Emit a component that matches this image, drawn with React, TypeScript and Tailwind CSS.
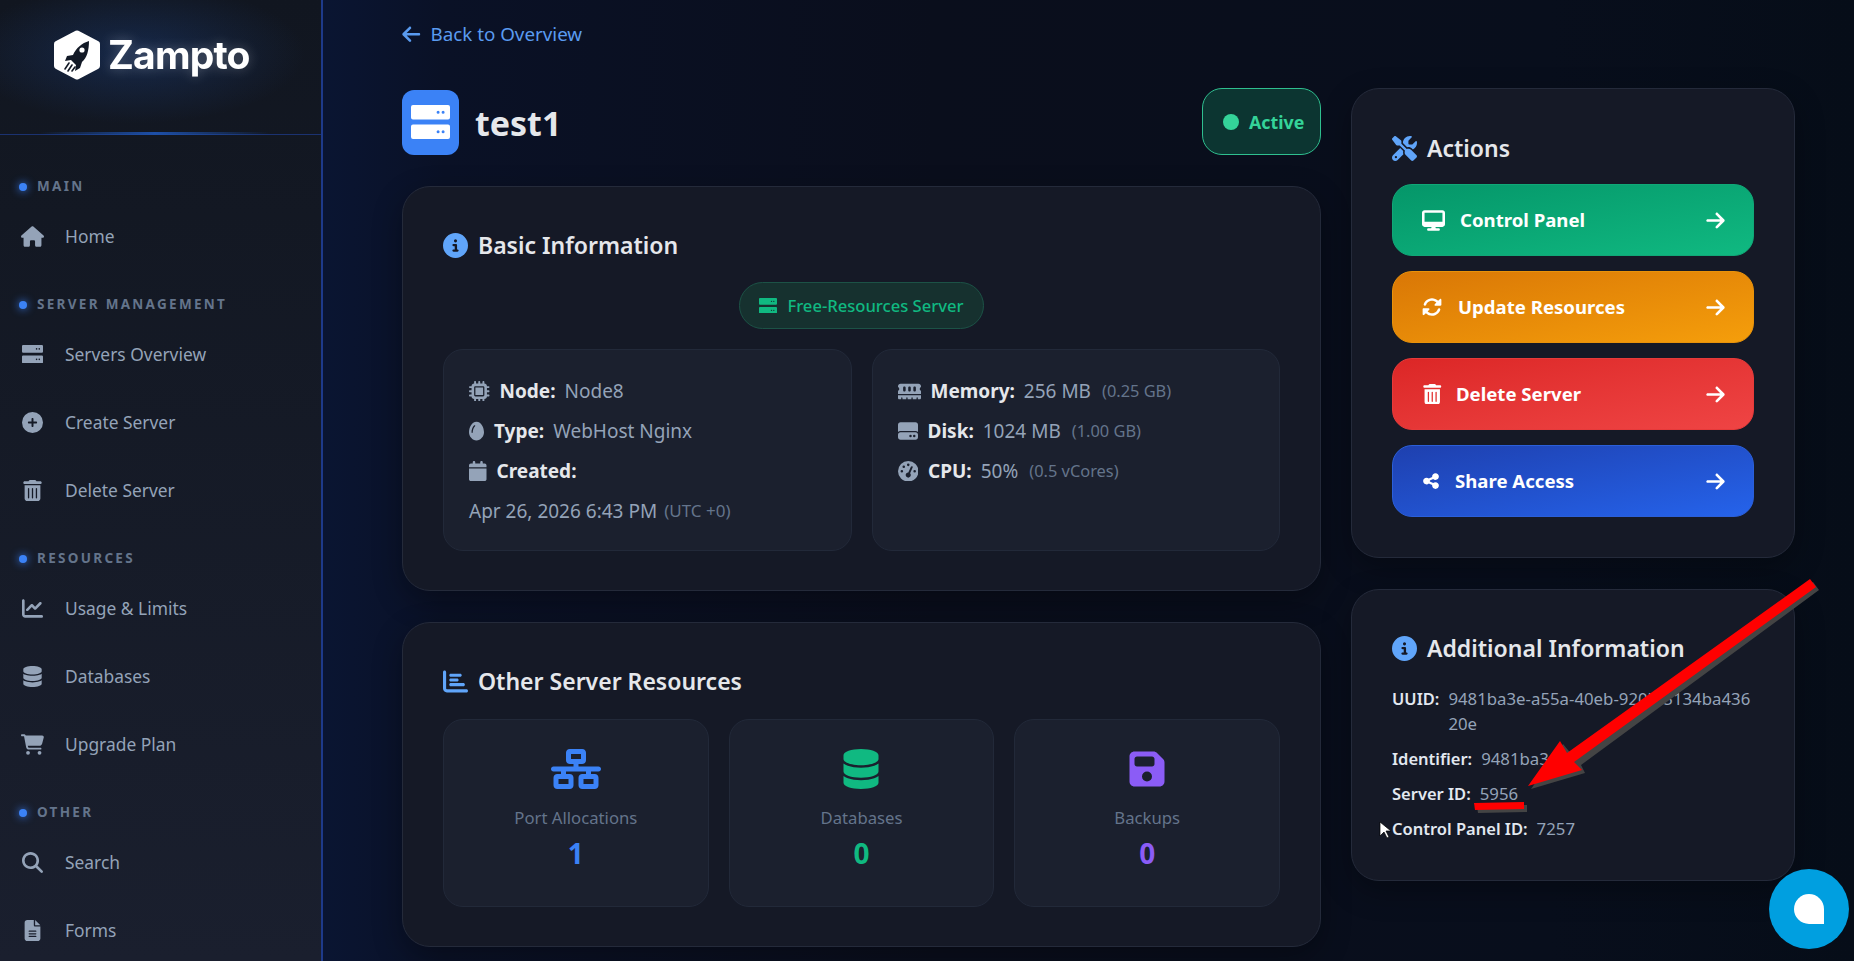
import React from "react";
import {
  FaHouse, FaCirclePlus, FaTrashCan, FaChartLine, FaDatabase, FaCartShopping, FaMagnifyingGlass, FaFileLines,
  FaArrowLeft, FaArrowRight, FaCircleInfo, FaMicrochip, FaEgg, FaCalendar, FaMemory, FaHardDrive, FaGaugeHigh,
  FaChartBar, FaNetworkWired, FaFloppyDisk, FaScrewdriverWrench, FaDesktop, FaRotate, FaShareNodes,
} from "react-icons/fa6";

type IconT = React.ComponentType<{ size?: number; className?: string }>;

function ServerIcon({ size = 20, className }: { size?: number; className?: string }) {
  const bar = (y: number) =>
    `M2 ${y}H37a2 2 0 0 1 2 2V${y + 12.6}a2 2 0 0 1-2 2H2a2 2 0 0 1-2-2V${y + 2}a2 2 0 0 1 2-2Z` +
    `M25.6 ${y + 7.3}a1.5 1.5 0 1 0 3 0a1.5 1.5 0 1 0-3 0Z` +
    `M30.6 ${y + 7.3}a1.5 1.5 0 1 0 3 0a1.5 1.5 0 1 0-3 0Z`;
  return (
    <svg width={size} height={(size * 34) / 39} viewBox="0 0 39 34" fill="currentColor" className={className}>
      <path fillRule="evenodd" d={bar(0) + bar(19.4)} />
    </svg>
  );
}

const nav: { label: string; items: [IconT, string, number][] }[] = [
  { label: "MAIN", items: [[FaHouse, "Home", 23]] },
  { label: "SERVER MANAGEMENT", items: [[ServerIcon, "Servers Overview", 21], [FaCirclePlus, "Create Server", 21], [FaTrashCan, "Delete Server", 21]] },
  { label: "RESOURCES", items: [[FaChartLine, "Usage & Limits", 21], [FaDatabase, "Databases", 21], [FaCartShopping, "Upgrade Plan", 23]] },
  { label: "OTHER", items: [[FaMagnifyingGlass, "Search", 21], [FaFileLines, "Forms", 21]] },
];

function Sidebar() {
  return (
    <aside className="w-[323px] shrink-0 h-full border-r-2 border-[#1e3a8a] bg-linear-to-b from-[#111620] to-[#1a1f2e] flex flex-col">
      <div className="relative h-[135px] shrink-0 border-b border-[#1b3270] bg-[radial-gradient(ellipse_170px_70px_at_42%_40%,rgba(30,70,140,0.38),transparent)]">
        <div className="flex items-center pl-[54px] pt-[30px]">
          <svg width="46" height="50" viewBox="0 0 46 50" className="shrink-0">
            <polygon points="23,3.5 43,14 43,36 23,46.5 3,36 3,14" fill="#fff" stroke="#fff" strokeWidth="6" strokeLinejoin="round" />
            <path d="M35 11 C28 13 22 18 19 25 L13 26 L11 31 L17 30 L22 35 L21 41 L26 38 L28 32 C33 28 35 20 35 11Z" fill="#121926" />
            <circle cx="28" cy="20" r="2.6" fill="#fff" />
            <path d="M15 33 L11 39 M18 35 L14 41 M21 37 L18 41" stroke="#121926" strokeWidth="1.6" strokeLinecap="round" />
          </svg>
          <span className="ml-[8px] -mt-[1px] font-['Inter',sans-serif] font-bold text-[39px] leading-none tracking-[-0.8px] text-white drop-shadow-[0_0_6px_rgba(255,255,255,0.25)]">Zampto</span>
        </div>
        <div className="absolute left-[40px] bottom-[-1px] w-[230px] h-[3px] bg-linear-to-r from-transparent via-[#1d4fa8] to-transparent" />
      </div>
      <nav className="pt-[33px] flex flex-col gap-[16px]">
        {nav.map((s) => (
          <div key={s.label}>
            <div className="h-[34px] pt-[3px] flex items-center pl-[19px]">
              <span className="w-[8px] h-[8px] rounded-full bg-[#3b82f6] shadow-[0_0_8px_#3b82f6]" />
              <span className="ml-[10px] text-[13.5px] font-bold tracking-[2.3px] text-[#64748b] leading-none">{s.label}</span>
            </div>
            {s.items.map(([I, t, sz]) => (
              <div key={t} className="h-[68px] flex items-center pl-[21px]">
                <span className="w-[23px] flex justify-center text-[#94a3b8]"><I size={sz} /></span>
                <span className="ml-[21px] text-[17.4px] text-[#94a3b8]">{t}</span>
              </div>
            ))}
          </div>
        ))}
      </nav>
    </aside>
  );
}

const card = "rounded-[28px] bg-[#151926] border border-[#242a3a] shadow-[0_10px_30px_rgba(0,0,0,0.3)]";
const sub = "rounded-[20px] bg-[#1b202e] border border-[#222939]";

function Heading({ icon, children, h = 38 }: { icon: React.ReactNode; children: React.ReactNode; h?: number }) {
  return (
    <div className={h === 38 ? "h-[38px] flex items-center" : "h-[36px] flex items-center"}>
      {icon}
      <span className="ml-[10px] text-[23px] font-semibold text-[#e5e7eb]">{children}</span>
    </div>
  );
}

function Row({ icon, label, value, note, noteClass = "ml-[11px] text-[16.4px]" }: { icon: React.ReactNode; label?: string; value?: string; note?: string; noteClass?: string }) {
  return (
    <div className="h-[40px] flex items-center text-[19px] whitespace-nowrap">
      {icon}
      {label && <span className="ml-[10px] font-bold text-[#e5e7eb] text-[19px]">{label}</span>}
      {value && <span className={"text-[#94a3b8] " + (label ? "ml-[9px]" : "")}>{value}</span>}
      {note && <span className={"text-[#64748b] " + noteClass}>{note}</span>}
    </div>
  );
}

function Stat({ icon, label, value, color }: { icon: React.ReactNode; label: string; value: string; color: string }) {
  return (
    <div className={sub + " h-[188px] flex flex-col items-center pt-[29px]"}>
      <div className="h-[40px] flex items-center">{icon}</div>
      <div className="mt-[17px] h-[24px] leading-[24px] text-[16.7px] text-[#64748b]">{label}</div>
      <div className={"mt-[4px] h-[38px] leading-[38px] text-[28px] font-bold " + color}>{value}</div>
    </div>
  );
}

const actions: [IconT, string, string, number, string][] = [
  [FaDesktop, "Control Panel", "from-[#059669] to-[#10b981] border-[#10a877]", 23, "ml-[15px]"],
  [FaRotate, "Update Resources", "from-[#d97706] to-[#f59e0b] border-[#e8920a]", 20, "ml-[16px]"],
  [FaTrashCan, "Delete Server", "from-[#dc2626] to-[#ef4444] border-[#e63a3a]", 20.5, "ml-[13.5px]"],
  [FaShareNodes, "Share Access", "from-[#1e40af] to-[#2563eb] border-[#2b5fd9]", 18, "ml-[15px]"],
];

const info: [string, string][] = [
  ["UUID:", "9481ba3e-a55a-40eb-920b-5134ba43620e"],
  ["Identifier:", "9481ba3e"],
  ["Server ID:", "5956"],
  ["Control Panel ID:", "7257"],
];

export default function App() {
  return (
    <div className="relative flex w-full h-[961px] overflow-hidden font-['Noto_Sans',sans-serif] bg-[#0a0e1c]">
      <Sidebar />
      <main className="flex-1 h-full pl-[79px] bg-[linear-gradient(90deg,#0a1532_0%,#0a1126_8%,#0a0e1c_40%,#080e1c_80%,#060d18_100%)]">
        <div className="h-[88px] pt-[20px]">
          <div className="h-[28px] flex items-center text-[#5a9bf0]">
            <FaArrowLeft size={20.5} className="-ml-[1px]" />
            <span className="ml-[9px] text-[18.8px]">Back to Overview</span>
          </div>
        </div>
        <div className="flex gap-[30px] items-start">
          <div className="w-[919px] shrink-0">
            <div className="h-[67px] flex items-center justify-between mb-[31px]">
              <div className="flex items-center">
                <div className="w-[57px] h-[65px] mt-[1px] rounded-[12px] bg-[#3b82f6] flex items-center justify-center text-white">
                  <ServerIcon size={39} />
                </div>
                <h1 className="ml-[16px] mt-[3px] text-[34px] font-bold text-[#e5e7eb] leading-none">test1</h1>
              </div>
              <div className="w-[119px] h-[67px] rounded-[20px] border-[1.5px] border-[#2fbf8f] bg-[#0c3531] flex items-center pl-[20px]">
                <span className="w-[16px] h-[16px] rounded-full bg-[#34d399]" />
                <span className="ml-[10px] pt-[2px] text-[17.8px] font-bold text-[#34d399]">Active</span>
              </div>
            </div>

            <section className={card + " h-[405px] pt-[39px] px-[40px]"}>
              <Heading icon={<FaCircleInfo size={25} className="text-[#60a5fa]" />}>Basic Information</Heading>
              <div className="mt-[18px] flex justify-center">
                <div className="h-[47px] w-[245px] rounded-full bg-[#16312f] border border-[#1c5246] flex items-center justify-center text-[#10b981]">
                  <ServerIcon size={18} />
                  <span className="ml-[10px] pt-[1px] text-[16.6px] font-medium">Free-Resources Server</span>
                </div>
              </div>
              <div className="mt-[20px] grid grid-cols-2 gap-[20px]">
                <div className={sub + " h-[202px] pt-[21px] pl-[25px]"}>
                  <Row icon={<FaMicrochip size={20.5} className="text-[#94a3b8]" />} label="Node:" value="Node8" />
                  <Row icon={<FaEgg size={20} className="text-[#94a3b8] w-[15px]" />} label="Type:" value="WebHost Nginx" />
                  <Row icon={<FaCalendar size={20} className="text-[#94a3b8] w-[17.5px]" />} label="Created:" />
                  <Row icon={null} value="Apr 26, 2026 6:43 PM" note="(UTC +0)" noteClass="ml-[7px] text-[17px]" />
                </div>
                <div className={sub + " h-[202px] pt-[21px] pl-[25px]"}>
                  <Row icon={<FaMemory size={23} className="text-[#94a3b8]" />} label="Memory:" value="256 MB" note="(0.25 GB)" />
                  <Row icon={<FaHardDrive size={20} className="text-[#94a3b8] w-[20px]" />} label="Disk:" value="1024 MB" note="(1.00 GB)" />
                  <Row icon={<FaGaugeHigh size={20.5} className="text-[#94a3b8]" />} label="CPU:" value="50%" note="(0.5 vCores)" />
                </div>
              </div>
            </section>

            <section className={card + " h-[325px] mt-[31px] pt-[39px] px-[40px]"}>
              <Heading icon={<FaChartBar size={25} className="text-[#60a5fa]" />}>Other Server Resources</Heading>
              <div className="mt-[19px] grid grid-cols-3 gap-[20px]">
                <Stat icon={<FaNetworkWired size={50} className="text-[#3b82f6]" />} label="Port Allocations" value="1" color="text-[#3b82f6]" />
                <Stat icon={<FaDatabase size={40} className="text-[#10b981]" />} label="Databases" value="0" color="text-[#10b981]" />
                <Stat icon={<FaFloppyDisk size={40} className="text-[#8b5cf6]" />} label="Backups" value="0" color="text-[#8b5cf6]" />
              </div>
            </section>
          </div>

          <div className="w-[444px] shrink-0">
            <section className={card + " h-[470px] pt-[41px] px-[40px]"}>
              <Heading h={36} icon={<FaScrewdriverWrench size={25} className="text-[#60a5fa]" />}>Actions</Heading>
              <div className="mt-[18px] flex flex-col gap-[15px]">
                {actions.map(([I, t, c, sz, ml]) => (
                  <div key={t} className={"h-[72px] rounded-[20px] border bg-linear-to-br flex items-center pl-[29px] pr-[27px] text-white " + c}>
                    <I size={sz} />
                    <span className={"text-[18.6px] font-bold " + ml}>{t}</span>
                    <FaArrowRight size={21} className="ml-auto" />
                  </div>
                ))}
              </div>
            </section>

            <section className={card + " h-[292px] mt-[31px] pt-[40px] px-[40px]"}>
              <Heading h={36} icon={<FaCircleInfo size={25} className="text-[#60a5fa]" />}>Additional Information</Heading>
              <div className="mt-[20px] flex flex-col gap-[10px] text-[16.5px] leading-[25px]">
                {info.map(([k, v]) => (
                  <div key={k} className="flex">
                    <span className="shrink-0 font-semibold text-[#e2e8f0]">{k}</span>
                    <span className="ml-[9px] min-w-0 break-all text-[16.8px] text-[#94a3b8]">{v}</span>
                  </div>
                ))}
              </div>
            </section>
          </div>
        </div>
      </main>

      <div className="absolute left-[1769px] top-[869px] w-[80px] h-[80px] rounded-full bg-[#009fe0] flex items-center justify-center">
        <span className="w-[30px] h-[30px] bg-white rounded-t-full rounded-bl-full" />
      </div>

      <svg className="absolute inset-0 pointer-events-none" width="1854" height="961" viewBox="0 0 1854 961">
        <g transform="translate(3 3)">
          <polygon points="1810,579 1816,587 1578,762 1582,770 1528,786 1560,741 1570,753" fill="#444" />
          <polygon points="1474,803 1524,802 1524,809 1475,810" fill="#444" />
        </g>
        <polygon points="1810,579 1816,587 1574,762 1582,770 1528,786 1560,741 1567,753" fill="#ff0000" />
        <polygon points="1474,803 1524,802 1524,809 1475,810" fill="#ff0000" />
        <polygon points="1380,822 1380,836 1384,832 1387,838 1389,837 1386,831 1391,831 Z" fill="#fff" stroke="#000" strokeWidth="0.7" />
      </svg>
    </div>
  );
}
